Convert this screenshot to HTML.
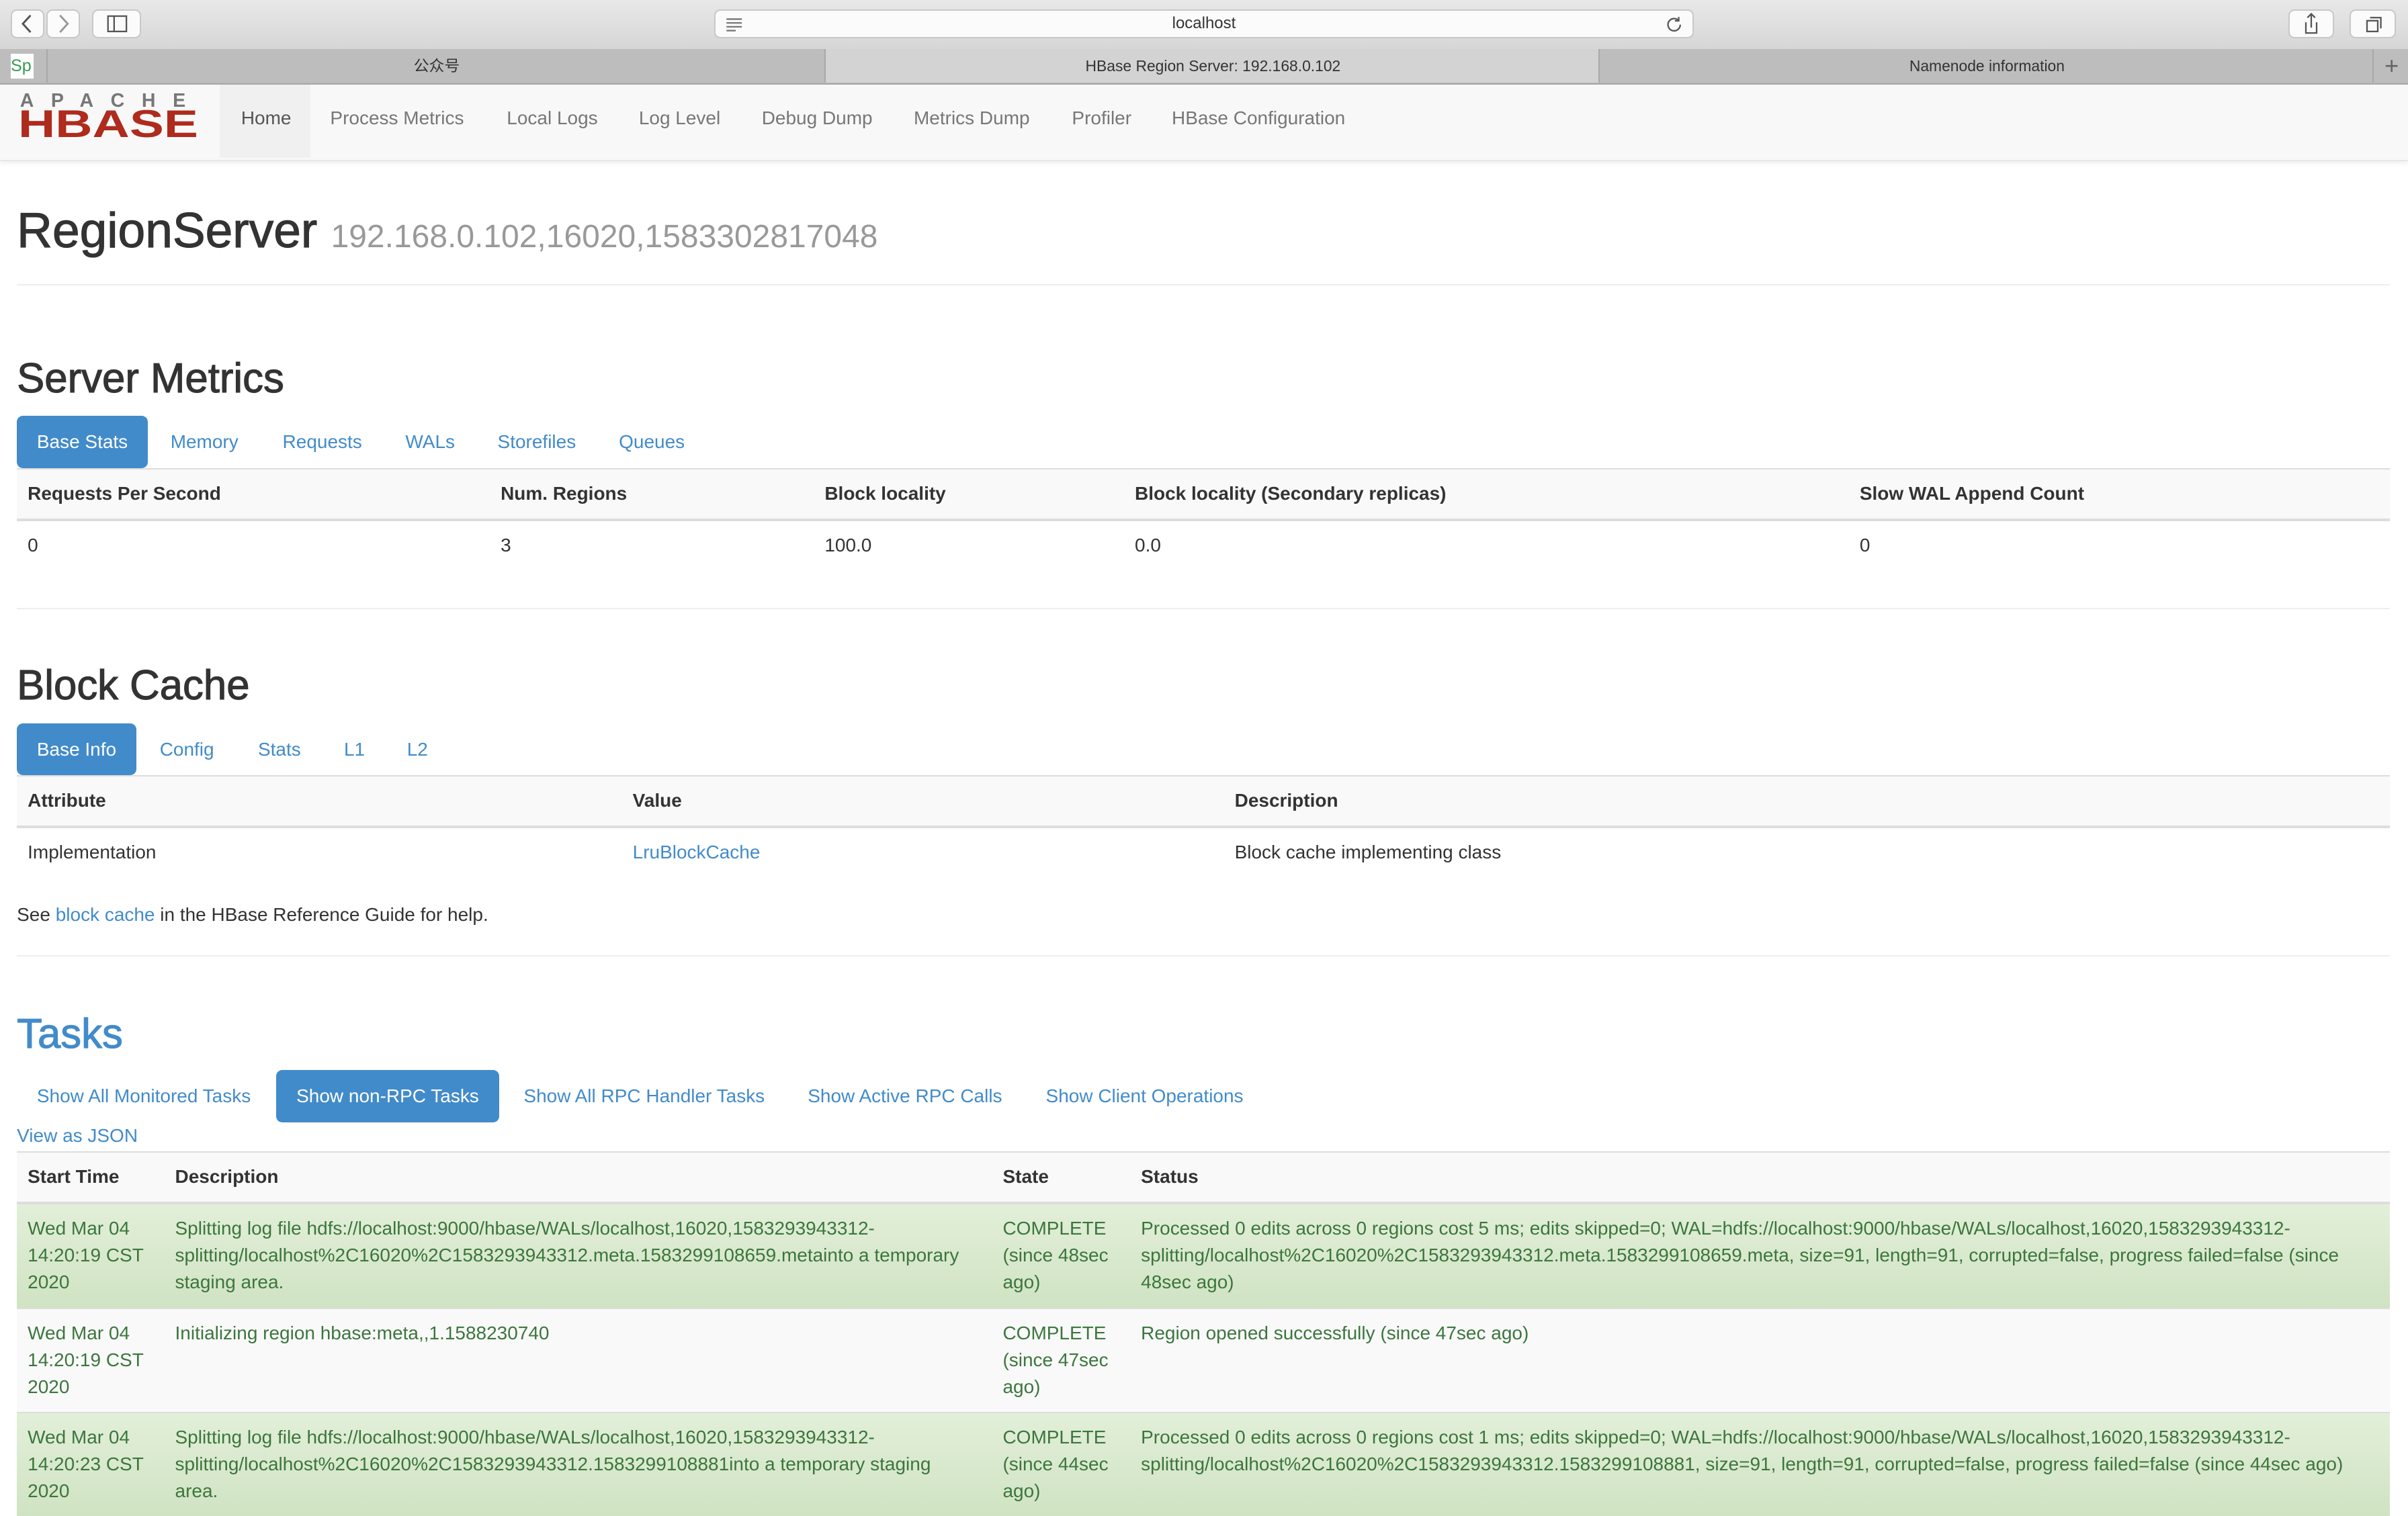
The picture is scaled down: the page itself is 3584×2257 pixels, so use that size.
<!DOCTYPE html>
<html><head><meta charset="utf-8">
<style>
html,body{margin:0;padding:0;}
body{width:1568px;height:980px;overflow:hidden;zoom:2.285714;font-family:"Liberation Sans","Noto Sans CJK SC",sans-serif;font-size:12.25px;color:#333;background:#fff;position:relative;}
.abs{position:absolute;}
a{color:#428bca;text-decoration:none;}
.toolbar{left:0;top:0;width:1568px;height:32px;background:linear-gradient(#e8e8e8,#d6d6d6);border-bottom:1px solid #b5b5b5;}
.btn{position:absolute;top:6px;height:19px;background:#fbfbfb;border:1px solid #c8c8c8;border-radius:4px;box-sizing:border-box;}
.tabs{left:0;top:32px;width:1568px;height:23px;background:#bdbdbd;border-bottom:1px solid #a8a8a8;box-sizing:border-box;font-size:10px;color:#333;}
.tab{position:absolute;top:0;height:22px;line-height:22px;text-align:center;border-left:1px solid #a8a8a8;}
.nav{left:0;top:55px;width:1568px;height:49px;background:#f8f8f8;border-bottom:1px solid #e7e7e7;box-shadow:0 1px 3px rgba(0,0,0,.08);}
.nav span{position:absolute;top:15px;font-size:12.25px;color:#777;}
h1,h2{margin:0;font-weight:normal;position:absolute;-webkit-text-stroke:0.5px currentColor;}
h1 small{-webkit-text-stroke:0;}
.hr{position:absolute;left:11px;width:1545px;height:1px;background:#eee;}
.pill{position:absolute;height:34px;line-height:34px;padding:0 13px;border-radius:4px;color:#428bca;}
.pill.on{background:#428bca;color:#fff;}
table{position:absolute;left:11px;width:1545px;border-collapse:collapse;}
th,td{text-align:left;vertical-align:top;padding:7px 7px 7.5px;line-height:17.5px;}
th{font-weight:bold;border-bottom:2px solid #ddd;border-top:1px solid #ddd;}
td{border-top:1px solid #ddd;}
tr.ok td{background:linear-gradient(#e2efd9,#d0e3c3);color:#3c763d;}
tr.wt td{background:#f9f9f9;color:#3c763d;}
</style></head><body>
<div class="abs toolbar">
  <div class="btn" style="left:7px;width:22px;"><svg width="20" height="17" viewBox="0 0 20 17"><path d="M12 3 L7 8.5 L12 14" stroke="#555" stroke-width="1.3" fill="none"/></svg></div>
  <div class="btn" style="left:30px;width:22px;"><svg width="20" height="17" viewBox="0 0 20 17"><path d="M8 3 L13 8.5 L8 14" stroke="#999" stroke-width="1.3" fill="none"/></svg></div>
  <div class="btn" style="left:60px;width:32px;"><svg width="30" height="17" viewBox="0 0 30 17"><rect x="9.5" y="3.5" width="12" height="10" stroke="#555" fill="none"/><line x1="13.5" y1="3.5" x2="13.5" y2="13.5" stroke="#555"/></svg></div>
  <div class="btn" style="left:465px;width:638px;text-align:center;font-size:10.5px;line-height:17px;color:#333;">localhost
    <svg style="position:absolute;left:6px;top:4px" width="12" height="10"><path d="M1 1.5h10M1 4h10M1 6.5h10M1 9h6" stroke="#777"/></svg>
    <svg style="position:absolute;right:6px;top:3px" width="12" height="12" viewBox="0 0 12 12"><path d="M10 6a4 4 0 1 1-1.5-3.1" stroke="#555" fill="none"/><path d="M9 1v2.5H6.5" stroke="#555" fill="none"/></svg></div>
  <div class="btn" style="left:1490px;width:30px;"><svg width="28" height="17" viewBox="0 0 28 17"><path d="M10.5 7.5v7h7v-7M14 2v9M11.5 4.5L14 2l2.5 2.5" stroke="#555" fill="none"/></svg></div>
  <div class="btn" style="left:1530px;width:30px;"><svg width="28" height="17" viewBox="0 0 28 17"><rect x="10.5" y="6.5" width="7" height="7" stroke="#555" fill="none"/><path d="M12.5 4.5h7v7" stroke="#555" fill="none"/></svg></div>
</div>
<div class="abs tabs">
  <div class="abs" style="left:7px;top:3px;width:15px;height:16px;background:#fff;font-size:11px;color:#3a9b50;line-height:16px;">Sp</div>
  <div class="tab" style="left:30px;width:507px;">公众号</div>
  <div class="tab" style="left:537px;width:504px;background:#d3d3d3;">HBase Region Server: 192.168.0.102</div>
  <div class="tab" style="left:1041px;width:504px;">Namenode information</div>
  <div class="tab" style="left:1545px;width:23px;font-size:16px;color:#666;">+</div>
</div>
<div class="abs nav">
  <div class="abs" style="left:13px;top:5px;width:130px;font-family:'Liberation Sans',sans-serif;font-weight:bold;font-size:12.5px;letter-spacing:11.2px;color:#777;line-height:12px;">APACHE</div>
  <div class="abs" style="left:12px;top:15px;height:22px;font-family:'Liberation Sans',sans-serif;font-weight:bold;font-size:25px;line-height:22px;color:#ae2b1d;transform:scale(1.34,1);transform-origin:left top;">HBASE</div>
  <div class="abs" style="left:143px;top:0;width:59px;height:48px;background:#f0f0f0;"></div>
  <span style="left:157px;color:#555;">Home</span>
  <span style="left:215px;">Process Metrics</span>
  <span style="left:330px;">Local Logs</span>
  <span style="left:416px;">Log Level</span>
  <span style="left:496px;">Debug Dump</span>
  <span style="left:595px;">Metrics Dump</span>
  <span style="left:698px;">Profiler</span>
  <span style="left:763px;">HBase Configuration</span>
</div>

<h1 style="left:11px;top:132px;font-size:32px;">RegionServer <small style="font-size:21px;color:#999;font-weight:normal;">192.168.0.102,16020,1583302817048</small></h1>
<div class="hr" style="top:185px;"></div>

<h2 style="left:11px;top:231px;font-size:27px;">Server Metrics</h2>
<div class="pill on" style="left:11px;top:271px;">Base Stats</div>
<div class="pill" style="left:98px;top:271px;">Memory</div>
<div class="pill" style="left:171px;top:271px;">Requests</div>
<div class="pill" style="left:251px;top:271px;">WALs</div>
<div class="pill" style="left:311px;top:271px;">Storefiles</div>
<div class="pill" style="left:390px;top:271px;">Queues</div>
<table style="top:305px;">
<tr style="background:#f9f9f9"><th style="width:294px">Requests Per Second</th><th style="width:197px">Num. Regions</th><th style="width:188px">Block locality</th><th style="width:458px">Block locality (Secondary replicas)</th><th>Slow WAL Append Count</th></tr>
<tr><td>0</td><td>3</td><td>100.0</td><td>0.0</td><td>0</td></tr>
</table>
<div class="hr" style="top:396px;"></div>

<h2 style="left:11px;top:431px;font-size:27px;">Block Cache</h2>
<div class="pill on" style="left:11px;top:471px;">Base Info</div>
<div class="pill" style="left:91px;top:471px;">Config</div>
<div class="pill" style="left:155px;top:471px;">Stats</div>
<div class="pill" style="left:211px;top:471px;">L1</div>
<div class="pill" style="left:252px;top:471px;">L2</div>
<table style="top:505px;">
<tr style="background:#f9f9f9"><th style="width:380px">Attribute</th><th style="width:378px">Value</th><th>Description</th></tr>
<tr><td>Implementation</td><td><a>LruBlockCache</a></td><td>Block cache implementing class</td></tr>
</table>
<div class="abs" style="left:11px;top:589px;">See <a>block cache</a> in the HBase Reference Guide for help.</div>
<div class="hr" style="top:622px;"></div>

<h2 style="left:11px;top:658px;font-size:27px;color:#428bca;">Tasks</h2>
<div class="pill" style="left:11px;top:697px;">Show All Monitored Tasks</div>
<div class="pill on" style="left:180px;top:697px;">Show non-RPC Tasks</div>
<div class="pill" style="left:328px;top:697px;">Show All RPC Handler Tasks</div>
<div class="pill" style="left:513px;top:697px;">Show Active RPC Calls</div>
<div class="pill" style="left:668px;top:697px;">Show Client Operations</div>
<div class="abs" style="left:11px;top:733px;"><a>View as JSON</a></div>
<table style="top:750px;">
<tr style="background:#f9f9f9"><th style="width:82px">Start Time</th><th style="width:525px">Description</th><th style="width:76px">State</th><th>Status</th></tr>
<tr class="ok"><td>Wed Mar 04<br>14:20:19 CST<br>2020</td><td>Splitting log file hdfs://localhost:9000/hbase/WALs/localhost,16020,1583293943312-<br>splitting/localhost%2C16020%2C1583293943312.meta.1583299108659.metainto a temporary<br>staging area.</td><td>COMPLETE<br>(since 48sec<br>ago)</td><td>Processed 0 edits across 0 regions cost 5 ms; edits skipped=0; WAL=hdfs://localhost:9000/hbase/WALs/localhost,16020,1583293943312-<br>splitting/localhost%2C16020%2C1583293943312.meta.1583299108659.meta, size=91, length=91, corrupted=false, progress failed=false (since<br>48sec ago)</td></tr>
<tr class="wt"><td>Wed Mar 04<br>14:20:19 CST<br>2020</td><td>Initializing region hbase:meta,,1.1588230740</td><td>COMPLETE<br>(since 47sec<br>ago)</td><td>Region opened successfully (since 47sec ago)</td></tr>
<tr class="ok"><td>Wed Mar 04<br>14:20:23 CST<br>2020</td><td>Splitting log file hdfs://localhost:9000/hbase/WALs/localhost,16020,1583293943312-<br>splitting/localhost%2C16020%2C1583293943312.1583299108881into a temporary staging<br>area.</td><td>COMPLETE<br>(since 44sec<br>ago)</td><td>Processed 0 edits across 0 regions cost 1 ms; edits skipped=0; WAL=hdfs://localhost:9000/hbase/WALs/localhost,16020,1583293943312-<br>splitting/localhost%2C16020%2C1583293943312.1583299108881, size=91, length=91, corrupted=false, progress failed=false (since 44sec ago)</td></tr>
</table>
</body></html>
